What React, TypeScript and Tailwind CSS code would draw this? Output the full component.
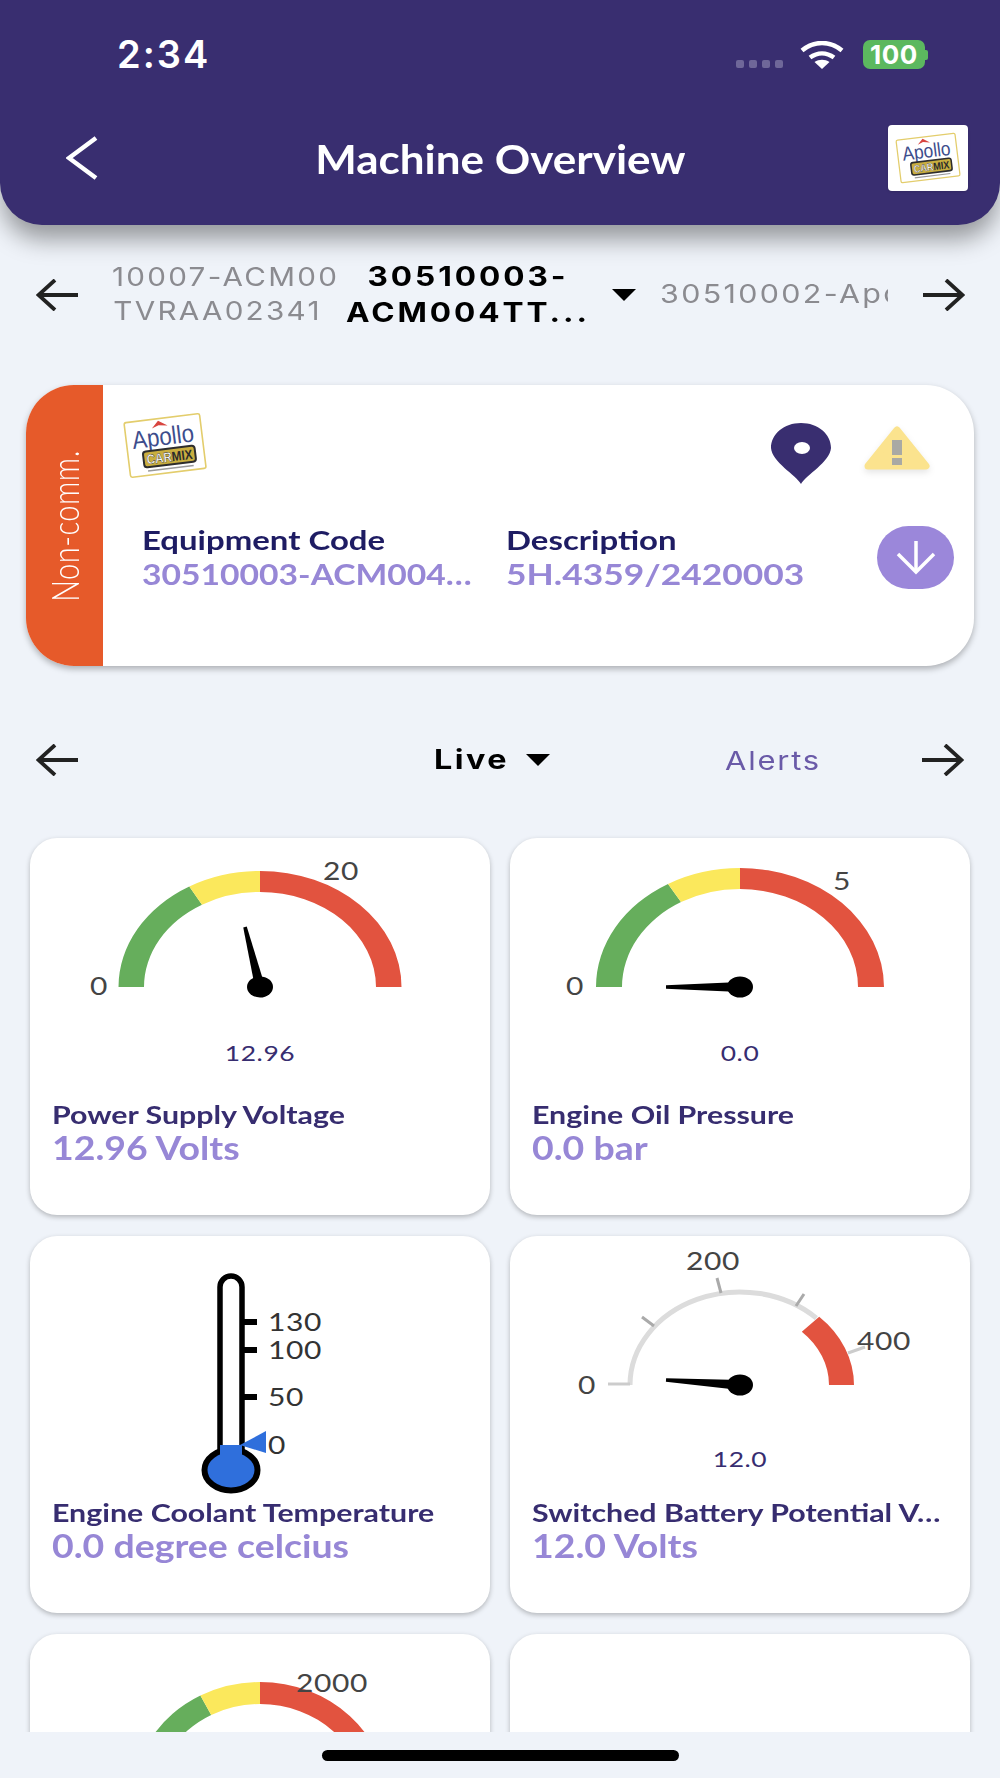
import React from "react";

function pt(cx: number, cy: number, rx: number, ry: number, a: number) {
  const r = (a * Math.PI) / 180;
  return `${(cx + rx * Math.cos(r)).toFixed(1)} ${(cy - ry * Math.sin(r)).toFixed(1)}`;
}

// band between two ellipses, angle 180 = left, 0 = right
function band(cx: number, cy: number, o: number[], i: number[], a0: number, a1: number) {
  return `M${pt(cx, cy, o[0], o[1], a0)} A${o[0]} ${o[1]} 0 0 1 ${pt(cx, cy, o[0], o[1], a1)} L${pt(cx, cy, i[0], i[1], a1)} A${i[0]} ${i[1]} 0 0 0 ${pt(cx, cy, i[0], i[1], a0)} Z`;
}

function Needle({ x, y, tx, ty }: { x: number; y: number; tx: number; ty: number }) {
  const dx = tx - x;
  const dy = ty - y;
  const l = Math.hypot(dx, dy);
  const nx = -dy / l;
  const ny = dx / l;
  const points = [
    [x + nx * 5, y + ny * 5],
    [tx + nx * 1.8, ty + ny * 1.8],
    [tx - nx * 1.8, ty - ny * 1.8],
    [x - nx * 5, y - ny * 5],
  ]
    .map((p) => p.join(","))
    .join(" ");
  return (
    <g>
      <polygon points={points} fill="#000" />
      <ellipse cx={x} cy={y} rx="13" ry="10.5" fill="#000" />
    </g>
  );
}

function Logo({ className }: { className: string }) {
  return (
    <svg viewBox="15 8 100 75" className={className}>
      <g transform="rotate(-7 65 45)">
        <rect x="27" y="18" width="76" height="55" rx="2" fill="#fff" stroke="#e3cd6c" strokeWidth="1.6" />
        <polygon points="54,27 61,20 70,26 61,24.5" fill="#d8453f" />
        <text x="33" y="45" fontFamily="Liberation Sans, sans-serif" fontSize="25" fill="#3d4d8c" textLength="62" lengthAdjust="spacingAndGlyphs">
          Apollo
        </text>
        <rect x="42" y="49" width="52" height="16" rx="3" fill="#c9ae3f" stroke="#2d2d2d" strokeWidth="2" />
        <text x="45" y="62" fontFamily="Liberation Sans, sans-serif" fontWeight="700" fontSize="13.5" textLength="46" lengthAdjust="spacingAndGlyphs">
          <tspan fill="#fff" stroke="#222" strokeWidth="0.4">CAR</tspan>
          <tspan fill="#2b2b2b">MIX</tspan>
        </text>
        <rect x="45" y="68" width="46" height="1.5" fill="#9a9a9a" />
      </g>
    </svg>
  );
}

function Arrow({ right }: { right?: boolean }) {
  return (
    <svg width="42" height="32" viewBox="0 0 42 32" className="shrink-0">
      <g fill="none" stroke="#222" strokeWidth="3.8" transform={right ? "rotate(180 21 16)" : undefined}>
        <path d="M2 16H42" />
        <path d="M19 1L2.5 16l16.5 15" />
      </g>
    </svg>
  );
}

function Caret({ className }: { className: string }) {
  return <div className={`h-0 w-0 shrink-0 border-x-[12px] border-t-[12px] border-x-transparent border-t-black ${className}`} />;
}

const labelFont = { fontFamily: "Lato, sans-serif" };

function GaugeLabel({ x, y, children, fill = "#444", size = 25, anchor = "middle" }: {
  x: number;
  y: number;
  children: React.ReactNode;
  fill?: string;
  size?: number;
  anchor?: "middle" | "start";
}) {
  return (
    <text transform={`translate(${x} ${y}) scale(1.2 1)`} textAnchor={anchor} fontSize={size} fill={fill} letterSpacing="0.5" style={labelFont}>
      {children}
    </text>
  );
}

function ColorGauge({ outer, inner, split, labels, value, tip, cy = 149 }: {
  outer: number[];
  inner: number[];
  split: number;
  labels: { x: number; y: number; t: string }[];
  value?: string;
  tip?: number[];
  cy?: number;
}) {
  return (
    <svg viewBox="0 0 460 260" className="block h-[260px] w-full shrink-0">
      <path d={band(230, cy, outer, inner, 180, split)} fill="#66ae5c" />
      <path d={band(230, cy, outer, inner, split, 90)} fill="#fbe85c" />
      <path d={band(230, cy, outer, inner, 90, 0)} fill="#e2533f" />
      {labels.map((l) => (
        <GaugeLabel key={l.t} x={l.x} y={l.y}>
          {l.t}
        </GaugeLabel>
      ))}
      {tip && <Needle x={230} y={cy} tx={tip[0]} ty={tip[1]} />}
      {value && (
        <GaugeLabel x={230} y={223} fill="#372d70" size={22}>
          {value}
        </GaugeLabel>
      )}
    </svg>
  );
}

function Thermometer() {
  const ticks = [
    { y: 86, t: "130" },
    { y: 114, t: "100" },
    { y: 161, t: "50" },
    { y: 209, t: "0" },
  ];
  return (
    <svg viewBox="0 0 460 260" className="block h-[260px] w-full shrink-0">
      <path d="M190 216V51a11 11 0 0 1 22 0V216" fill="#fff" stroke="#000" strokeWidth="5.5" />
      <ellipse cx="201" cy="234" rx="26.5" ry="20.5" fill="#2f6fdc" stroke="#000" strokeWidth="6" />
      <rect x="190" y="209" width="22" height="22" fill="#2f6fdc" />
      <polygon points="210,209 236,195 236,217" fill="#2f6fdc" />
      {ticks.slice(0, 3).map((k) => (
        <rect key={k.t} x="212" y={k.y - 3} width="15" height="6" fill="#000" />
      ))}
      {ticks.map((k) => (
        <GaugeLabel key={k.t} x={238} y={k.y + 9} fill="#333" anchor="start">
          {k.t}
        </GaugeLabel>
      ))}
    </svg>
  );
}

function RangeGauge() {
  return (
    <svg viewBox="0 0 460 260" className="block h-[260px] w-full shrink-0">
      <path d={`M${pt(230, 149, 110, 93, 180)} A110 93 0 0 1 ${pt(230, 149, 110, 93, 46)}`} fill="none" stroke="#dcdcdc" strokeWidth="5" />
      <path d="M98 148H120" stroke="#ccc" strokeWidth="3" />
      <path d="M132 81L144 90M207 42L211 57M294 58L286 70" stroke="#aaa" strokeWidth="3" />
      <path d="M338 117L355 111" stroke="#ccc" strokeWidth="3" />
      <path d={band(230, 149, [114, 95], [89, 74], 46, 0)} fill="#e2533f" />
      <GaugeLabel x={77} y={158}>0</GaugeLabel>
      <GaugeLabel x={203} y={34}>200</GaugeLabel>
      <GaugeLabel x={374} y={114}>400</GaugeLabel>
      <Needle x={230} y={149} tx={156} ty={144} />
      <GaugeLabel x={230} y={231} fill="#372d70" size={22}>12.0</GaugeLabel>
    </svg>
  );
}

function Card({ name, value, children }: { name?: string; value?: string; children?: React.ReactNode }) {
  return (
    <div className="h-[377px] overflow-hidden rounded-[27px] bg-white shadow-[0_2px_5px_rgba(0,0,0,0.25)]">
      {children}
      {name && (
        <div className="-mt-[1px] pl-[22px] font-['Lato',sans-serif] font-bold">
          <div className="w-[354px] origin-left scale-x-[1.19] truncate text-[25.5px] leading-[34px] text-[#372d70]">{name}</div>
          <div className="w-[354px] origin-left scale-x-[1.17] truncate text-[32px] leading-[34px] text-[#9787d6]">{value}</div>
        </div>
      )}
    </div>
  );
}

export default function App() {
  return (
    <div className="flex h-[1778px] w-[1000px] flex-col overflow-hidden bg-[#eff3f9]">
      <header className="relative z-10 h-[225px] shrink-0 rounded-b-[42px] bg-[#392e70] text-white shadow-[0_16px_24px_-2px_rgba(0,0,0,0.38)]">
        <div className="flex h-[108px] items-start pl-[117px] pr-[72px] pt-[33px]">
          <span className="font-['Inter',sans-serif] text-[38px] font-semibold leading-[42px] tracking-[2px]">2:34</span>
          <div className="ml-auto flex items-start">
            <div className="mt-[27px] flex gap-[5px]">
              <i className="h-[8px] w-[8px] rounded-[2px] bg-[#6f6799]" />
              <i className="h-[8px] w-[8px] rounded-[2px] bg-[#6f6799]" />
              <i className="h-[8px] w-[8px] rounded-[2px] bg-[#6f6799]" />
              <i className="h-[8px] w-[8px] rounded-[2px] bg-[#6f6799]" />
            </div>
            <svg width="44" height="28" viewBox="0 0 44 28" className="ml-[17px] mt-[8px]" fill="none" stroke="#fff" strokeWidth="4.5">
              <path d="M2 9.5C14-.5 30-.5 42 9.5" />
              <path d="M10 16.5c7.5-5.5 16.5-5.5 24 0" />
              <path d="M22 28l-7.5-7c4.5-3 10.5-3 15 0z" fill="#fff" stroke="none" />
            </svg>
            <div className="ml-[19px] mt-[7px] flex items-center">
              <div className="flex h-[29px] w-[62px] items-center justify-center rounded-[7px] bg-[#5cb85f] font-['Inter',sans-serif] text-[26px] font-bold leading-none tracking-[0.5px]">100</div>
              <div className="h-[10px] w-[3px] rounded-r-[2px] bg-[#5cb85f]" />
            </div>
          </div>
        </div>
        <div className="relative flex h-[80px] items-center justify-center">
          <svg width="32" height="44" viewBox="0 0 32 44" className="absolute left-[66px] top-[28px]" fill="none" stroke="#fff" strokeWidth="4.5">
            <path d="M30 2L3 22l27 20" />
          </svg>
          <h1 className="mt-[22px] origin-center scale-x-[1.1] font-['Lato',sans-serif] text-[40px] font-bold leading-none">Machine Overview</h1>
          <div className="absolute left-[888px] top-[17px] flex h-[66px] w-[80px] items-center justify-center rounded-[4px] bg-white shadow-sm">
            <Logo className="h-[60px] w-[78px]" />
          </div>
        </div>
      </header>

      <main className="min-h-0 flex-1 overflow-hidden">
        <div className="mt-[30px] flex h-[80px] items-center pl-[36px] font-['Inter',sans-serif]">
          <Arrow />
          <div className="-mt-[2px] ml-[34px] w-[226px] overflow-hidden">
            <div className="-ml-[30px] w-[262px] origin-right scale-x-[1.14] whitespace-nowrap text-center text-[26px] leading-[34px] tracking-[2px] text-[#8b8b90]">
              30510007-ACM00
              <br />
              ACTVRAA02341
            </div>
          </div>
          <div className="ml-[12px] w-[236px] scale-x-[1.17] whitespace-nowrap text-center text-[27px] font-bold leading-[36px] tracking-[2.5px] text-black">
            30510003-
            <br />
            ACM004TT...
          </div>
          <Caret className="ml-[26px]" />
          <div className="-mt-[4px] ml-[24px] w-[228px] overflow-hidden whitespace-nowrap text-[26px] tracking-[2px] text-[#8b8b90]">
            <div className="origin-left scale-x-[1.17]">30510002-Apollo</div>
          </div>
          <div className="ml-[35px]">
            <Arrow right />
          </div>
        </div>

        <section className="mx-[26px] mt-[50px] flex h-[281px] overflow-hidden rounded-[48px] bg-white shadow-[0_3px_6px_rgba(0,0,0,0.28)]">
          <div className="flex w-[77px] shrink-0 items-center justify-center bg-[#e65a2a]">
            <span className="rotate-180 scale-x-[1.3] font-['Lato',sans-serif] text-[29px] font-light leading-none tracking-[0.5px] text-white [writing-mode:vertical-rl]">
              Non-comm.
            </span>
          </div>
          <div className="flex flex-1 flex-col pt-[23px]">
            <div className="flex h-[75px] items-start pl-[12px] pr-[44px]">
              <Logo className="h-[75px] w-[100px]" />
              <div className="ml-auto mt-[15px] flex items-start">
                <svg width="60" height="61" viewBox="0 0 60 61">
                  <path d="M30 61C25 52 1 39 0 25 0 11 13 0 30 0s30 11 30 25c-1 14-25 27-30 36z" fill="#392e70" />
                  <ellipse cx="31" cy="25" rx="8" ry="6" fill="#fff" />
                </svg>
                <svg width="66" height="48" viewBox="0 0 66 48" className="ml-[33px] mt-[3px] drop-shadow-[0_3px_3px_rgba(0,0,0,0.1)]">
                  <path d="M33 4L62 40H4z" fill="#fbe38e" stroke="#fbe38e" strokeWidth="7" strokeLinejoin="round" />
                  <rect x="28" y="14" width="10" height="15" fill="#a9a9a4" />
                  <rect x="28" y="32" width="10" height="7" fill="#a9a9a4" />
                </svg>
              </div>
            </div>
            <div className="mt-[40px] flex items-center pl-[39px] font-['Lato',sans-serif] font-bold">
              <div className="w-[347px] shrink-0">
                <div className="origin-left scale-x-[1.22] text-[27px] leading-[34px] text-[#1e1c63]">Equipment Code</div>
                <div className="w-[298px] origin-left scale-x-[1.16] truncate text-[29px] leading-[34px] text-[#9787d6]">30510003-ACM004TVRAA</div>
              </div>
              <div className="ml-[17px] w-[360px] shrink-0">
                <div className="origin-left scale-x-[1.22] text-[27px] leading-[34px] text-[#1e1c63]">Description</div>
                <div className="origin-left scale-x-[1.22] truncate text-[29px] leading-[34px] text-[#9787d6]">5H.4359/2420003</div>
              </div>
              <div className="ml-[11px] flex h-[63px] w-[77px] shrink-0 items-center justify-center rounded-full bg-[#9b87da]">
                <svg width="40" height="36" viewBox="0 0 40 36" fill="none" stroke="#fff" strokeWidth="3.5">
                  <path d="M20 2V33" />
                  <path d="M2 15l18 18 18-18" />
                </svg>
              </div>
            </div>
          </div>
        </section>

        <div className="mt-[69px] flex h-[50px] items-center pl-[36px] font-['Inter',sans-serif]">
          <Arrow />
          <span className="ml-[356px] w-[71px] origin-left scale-x-[1.2] text-[27px] font-bold tracking-[2px] text-black">Live</span>
          <Caret className="ml-[21px]" />
          <span className="ml-[175px] w-[93px] origin-left scale-x-[1.19] whitespace-nowrap text-[26px] tracking-[1.5px] text-[#6a5aa8]">Alerts</span>
          <div className="ml-[104px]">
            <Arrow right />
          </div>
        </div>

        <div className="mt-[53px] grid grid-cols-2 gap-x-[20px] gap-y-[21px] px-[30px]">
          <Card name="Power Supply Voltage" value="12.96 Volts">
            <ColorGauge
              outer={[141.5, 116]}
              inner={[116, 95]}
              split={120}
              labels={[
                { x: 69, y: 157, t: "0" },
                { x: 311, y: 42, t: "20" },
              ]}
              value="12.96"
              tip={[215, 89]}
            />
          </Card>
          <Card name="Engine Oil Pressure" value="0.0 bar">
            <ColorGauge
              outer={[144, 119]}
              inner={[118, 98]}
              split={120}
              labels={[
                { x: 65, y: 157, t: "0" },
                { x: 332, y: 52, t: "5" },
              ]}
              value="0.0"
              tip={[156, 149]}
            />
          </Card>
          <Card name="Engine Coolant Temperature" value="0.0 degree celcius">
            <Thermometer />
          </Card>
          <Card name="Switched Battery Potential Voltage" value="12.0 Volts">
            <RangeGauge />
          </Card>
          <Card>
            <ColorGauge
              outer={[127, 116]}
              inner={[104, 94]}
              split={118}
              cy={164}
              labels={[{ x: 302, y: 58, t: "2000" }]}
            />
          </Card>
          <Card />
        </div>
      </main>

      <footer className="flex h-[46px] shrink-0 justify-center pl-[1px] pt-[18px]">
        <div className="h-[11px] w-[357px] rounded-full bg-black" />
      </footer>
    </div>
  );
}
